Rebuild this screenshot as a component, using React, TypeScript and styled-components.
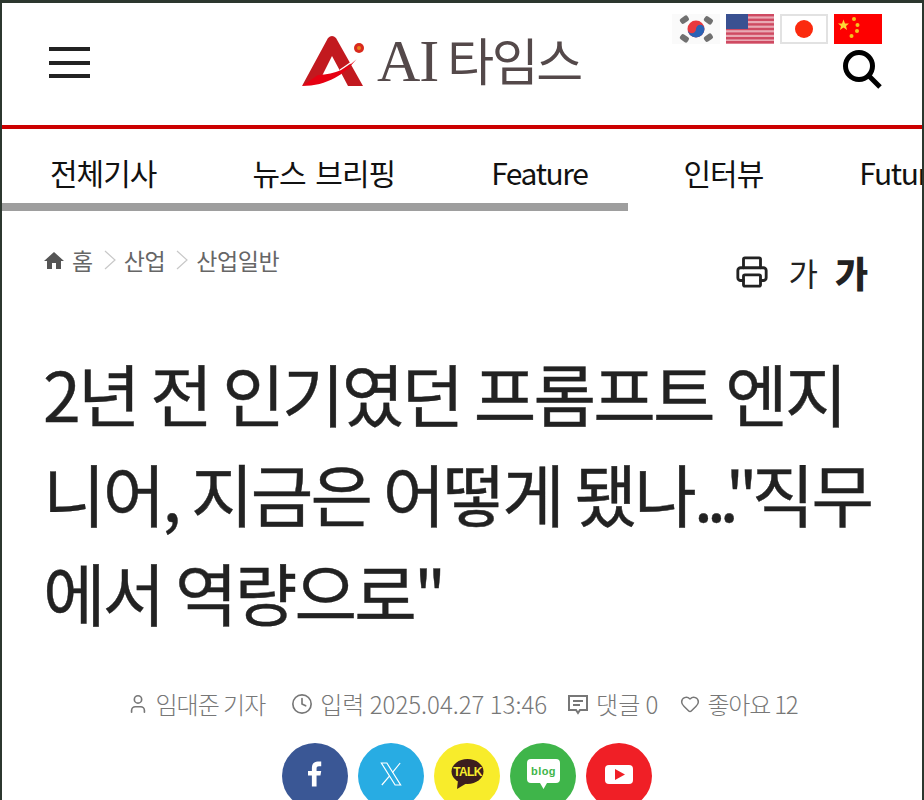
import React from 'react';
import styled, { createGlobalStyle } from 'styled-components';
import { Clock, Heart, Printer, User } from 'lucide-react';

const GlobalStyle = createGlobalStyle`
  html, body {
    margin: 0;
    padding: 0;
    background: #fff;
    overflow: hidden;
  }
  * { box-sizing: border-box; }
`;

const Page = styled.div`
  width: 924px;
  height: 800px;
  overflow: hidden;
  background: #fff;
  border-style: solid;
  border-color: #2c372f;
  border-width: 3px 2px 0 2px;
  font-family: 'Noto Sans CJK KR', 'Noto Sans', sans-serif;
`;

const Header = styled.header`
  position: relative;
  height: 122px;
  display: grid;
  grid-template-columns: 46px 1fr 40px;
  align-items: center;
  padding: 0 40px 0 46px;
`;

const RedLine = styled.div`
  height: 4px;
  background: #cc0000;
`;

const Burger = styled.div`
  width: 41px;
  height: 31px;
  display: flex;
  flex-direction: column;
  justify-content: space-between;
  margin: 0 0 3px 1px;
  & > span {
    height: 4px;
    background: #222;
  }
`;

const LogoWrap = styled.div`
  display: flex;
  align-items: center;
  gap: 13px;
  margin: 0 0 6px 208px;
`;

const LogoText = styled.div`
  display: flex;
  align-items: baseline;
  color: #54494a;
  line-height: 1;
`;

const LogoLatin = styled.span`
  font-family: 'Liberation Serif', serif;
  font-size: 60px;
  letter-spacing: -1px;
  margin-right: 9px;
`;

const LogoKorean = styled.span`
  font-weight: 400;
  font-size: 51px;
  letter-spacing: -2.5px;
`;

const Flags = styled.div`
  position: absolute;
  top: 11px;
  right: 40px;
  display: flex;
  gap: 6px;
`;

const SearchBtn = styled.div`
  display: flex;
  justify-content: flex-end;
  margin-top: 10px;
`;

const Nav = styled.nav`
  position: relative;
  height: 82px;
  display: flex;
  gap: 96px;
  padding: 21px 0 0 48px;
  overflow: hidden;
  white-space: nowrap;
`;

const NavItem = styled.a<{ $latin?: boolean }>`
  font-size: 30px;
  line-height: 44px;
  letter-spacing: ${(p) => (p.$latin ? '-1.4px' : '-1px')};
  word-spacing: 4px;
  color: #111;
  flex: none;
`;

const NavBar = styled.div`
  position: absolute;
  left: 0;
  bottom: 0;
  width: 626px;
  height: 8px;
  background: #9e9e9e;
`;

const TopRow = styled.div`
  display: flex;
  justify-content: space-between;
  align-items: flex-start;
  padding: 31px 54px 0 42px;
`;

const Crumbs = styled.div`
  display: flex;
  align-items: center;
  gap: 8px;
  color: #666;
  font-size: 23px;
  line-height: 36px;
  letter-spacing: -0.4px;
`;

const ChevronIcon = styled.svg`
  margin-left: 3px;
`;

const Tools = styled.div`
  display: flex;
  align-items: center;
  color: #222;
  margin-top: 8px;
`;

const FontSmall = styled.span`
  font-size: 32px;
  line-height: 44px;
  margin-left: 19px;
`;

const FontLarge = styled.span`
  font-size: 36px;
  line-height: 44px;
  font-weight: 900;
  margin-left: 17px;
`;

const Title = styled.h1`
  margin: 49px 0 0;
  padding: 0 32px 0 41px;
  font-size: 68px;
  line-height: 99.5px;
  font-weight: 400;
  letter-spacing: -2.8px;
  color: #222;
  word-break: break-all;
  -webkit-text-stroke: 0.4px #222;
`;

const TitlePunct = styled.span`
  letter-spacing: -6px;
`;

const Meta = styled.div`
  display: flex;
  justify-content: center;
  margin-top: 44px;
  color: #777;
  font-size: 24px;
  line-height: 36px;
  font-weight: 300;
`;

const MetaItem = styled.span<{ $spacing: number; $after?: number }>`
  display: flex;
  align-items: center;
  gap: 7px;
  letter-spacing: ${(p) => p.$spacing}px;
  margin-right: ${(p) => p.$after ?? 0}px;
`;

const Socials = styled.div`
  display: flex;
  justify-content: center;
  gap: 10px;
  margin-top: 21px;
  padding-left: 10px;
`;

const Circle = styled.div<{ $bg: string }>`
  width: 66px;
  height: 66px;
  border-radius: 50%;
  background: ${(p) => p.$bg};
  display: flex;
  align-items: center;
  justify-content: center;
  flex: none;
  padding-bottom: 3px;
`;

const LogoMark = () => (
  <svg width="62" height="50" viewBox="0 0 62 50">
    <path d="M0 50 L26 2 Q30 -2 34 2 L61 50 H46 L37 33 L30 20 L19 42 Z" fill="#c2191f" />
    <path d="M0 50 C25 50 44 38 55 22 C46 33 34 38 16 39 Z" fill="#e60012" />
    <path d="M38 34 C44 30 50 26 55 22" stroke="#fff" strokeWidth="1.2" fill="none" />
    <circle cx="57" cy="12" r="5" fill="#d92a1c" />
    <circle cx="57" cy="12" r="2" fill="#e8811a" />
  </svg>
);

const FlagKorea = () => (
  <svg width="48" height="30" viewBox="0 0 48 30">
    <rect width="48" height="30" fill="#fafafa" />
    <g fill="#707070">
      <rect x="8" y="3" width="9" height="6" rx="2" transform="rotate(-35 12 6)" />
      <rect x="32" y="3" width="9" height="6" rx="2" transform="rotate(35 36 6)" />
      <rect x="8" y="21" width="9" height="6" rx="2" transform="rotate(35 12 24)" />
      <rect x="32" y="21" width="9" height="6" rx="2" transform="rotate(-35 36 24)" />
    </g>
    <circle cx="24" cy="15" r="8.5" fill="#e8393f" />
    <path d="M15.5 15 A8.5 8.5 0 0 0 32.5 15 A4.2 4.2 0 0 0 24 15 A4.2 4.2 0 0 1 15.5 15" fill="#2a62b5" />
  </svg>
);

const FlagUsa = () => (
  <svg width="48" height="30" viewBox="0 0 48 30">
    <rect width="48" height="30" fill="#e9a9b4" />
    {[0, 4.6, 9.2, 13.8, 18.4, 23, 27].map((y) => (
      <rect key={y} y={y} width="48" height="2.4" fill="#cf4a62" />
    ))}
    <rect width="22" height="15" fill="#3a5191" />
  </svg>
);

const FlagJapan = () => (
  <svg width="48" height="30" viewBox="0 0 48 30">
    <rect x="1" y="1" width="46" height="28" fill="#fff" stroke="#e2e2e2" strokeWidth="2" />
    <circle cx="24" cy="15" r="9" fill="#fb2a0e" />
  </svg>
);

const FlagChina = () => (
  <svg width="48" height="30" viewBox="0 0 48 30">
    <rect width="48" height="30" fill="#fe0000" />
    <path d="M9.5 5.5 L11 9.5 L15 9.5 L12 12 L13 16 L9.5 13.6 L6 16 L7 12 L4 9.5 L8 9.5 Z" fill="#fdd835" />
    <g fill="#f6c51c">
      <circle cx="20" cy="5" r="2" />
      <circle cx="23.5" cy="11" r="2" />
      <circle cx="23" cy="17" r="2" />
      <circle cx="17.5" cy="22" r="2" />
    </g>
  </svg>
);

const HomeIcon = () => (
  <svg width="20" height="20" viewBox="0 0 20 20" fill="#555">
    <path d="M10 2 L20 11 H17 V19 H12 V13 H8 V19 H3 V11 H0 Z" />
  </svg>
);

const Chevron = () => (
  <ChevronIcon width="12" height="22" viewBox="0 0 12 22" fill="none" stroke="#c8c8c8" strokeWidth="1.2">
    <path d="M1 2 L11 11 L1 20" />
  </ChevronIcon>
);

const Comment = () => (
  <svg width="22" height="22" viewBox="0 0 22 22" fill="none" stroke="#777" strokeWidth="2">
    <path d="M2 3 H20 V17 H13 L11 20 L9 17 H2 Z" />
    <path d="M6 8 H16 M6 12 H13" />
  </svg>
);

const FacebookMark = () => (
  <svg width="14" height="26" viewBox="0 0 18 32" fill="#fff">
    <path d="M5 32 V18 H0 V12 H5 V8 C5 3 8 0 12.5 0 H17 V6 H14 C12 6 11 7 11 9 V12 H17 L16 18 H11 V32 Z" />
  </svg>
);

const XMark = () => (
  <svg width="22" height="24" viewBox="0 0 24 26" fill="none" stroke="#fff" strokeWidth="1.3">
    <path d="M1.5 1 H7.5 L22.5 25 H16.5 Z" />
    <path d="M22 1 L13.5 11.5 M10.5 15 L2 25" />
  </svg>
);

const KakaoMark = () => (
  <svg width="33" height="30" viewBox="0 0 33 30">
    <ellipse cx="16.5" cy="12.5" rx="16" ry="12.5" fill="#3c1e1e" />
    <path d="M7 21 L6 30 L16 24 Z" fill="#3c1e1e" />
    <text x="16.5" y="17" textAnchor="middle" fontFamily="Liberation Sans" fontWeight="700" fontSize="12" letterSpacing="-0.6" fill="#f8ec2b">TALK</text>
  </svg>
);

const BlogMark = () => (
  <svg width="33" height="30" viewBox="0 0 33 30">
    <path d="M4 0 H29 Q33 0 33 4 V20 Q33 24 29 24 H20 L16.5 30 L13 24 H4 Q0 24 0 20 V4 Q0 0 4 0 Z" fill="#fff" />
    <text x="16.5" y="16" textAnchor="middle" fontFamily="Liberation Sans" fontWeight="700" fontSize="11" letterSpacing="0.4" fill="#3fb54a">blog</text>
  </svg>
);

const YoutubeMark = () => (
  <svg width="28" height="19" viewBox="0 0 28 19">
    <rect width="28" height="19" rx="4" fill="#fff" />
    <path d="M10 4 L20 9.5 L10 15 Z" fill="#f01f26" />
  </svg>
);

export default function App() {
  return (
    <Page>
      <GlobalStyle />
      <Header>
        <Burger>
          <span />
          <span />
          <span />
        </Burger>
        <LogoWrap>
          <LogoMark />
          <LogoText>
            <LogoLatin>AI</LogoLatin>
            <LogoKorean>타임스</LogoKorean>
          </LogoText>
        </LogoWrap>
        <SearchBtn>
          <svg width="40" height="40" viewBox="0 0 40 40" fill="none" stroke="#000" strokeWidth="5">
            <circle cx="17" cy="17" r="13.5" />
            <path d="M27 27 L38 38" />
          </svg>
        </SearchBtn>
        <Flags>
          <FlagKorea />
          <FlagUsa />
          <FlagJapan />
          <FlagChina />
        </Flags>
      </Header>
      <RedLine />
      <Nav>
        <NavItem>전체기사</NavItem>
        <NavItem>뉴스 브리핑</NavItem>
        <NavItem $latin>Feature</NavItem>
        <NavItem>인터뷰</NavItem>
        <NavItem $latin>Future</NavItem>
        <NavBar />
      </Nav>
      <TopRow>
        <Crumbs>
          <HomeIcon />
          <span>홈</span>
          <Chevron />
          <span>산업</span>
          <Chevron />
          <span>산업일반</span>
        </Crumbs>
        <Tools>
          <Printer size={34} strokeWidth={2} />
          <FontSmall>가</FontSmall>
          <FontLarge>가</FontLarge>
        </Tools>
      </TopRow>
      <Title>
        2년 전 인기였던 프롬프트 엔지니어, 지금은 어떻게 됐나<TitlePunct>..."</TitlePunct>직무에서 역량으로"
      </Title>
      <Meta>
        <MetaItem $spacing={-1} $after={26}>
          <User size={22} strokeWidth={1.8} />
          임대준 기자
        </MetaItem>
        <MetaItem $spacing={0} $after={20}>
          <Clock size={22} strokeWidth={1.8} />
          입력 2025.04.27 13:46
        </MetaItem>
        <MetaItem $spacing={0} $after={22}>
          <Comment />
          댓글 0
        </MetaItem>
        <MetaItem $spacing={-1.2}>
          <Heart size={20} strokeWidth={1.8} />
          좋아요 12
        </MetaItem>
      </Meta>
      <Socials>
        <Circle $bg="#3a5795">
          <FacebookMark />
        </Circle>
        <Circle $bg="#28ace3">
          <XMark />
        </Circle>
        <Circle $bg="#f8ec2b">
          <KakaoMark />
        </Circle>
        <Circle $bg="#3fb54a">
          <BlogMark />
        </Circle>
        <Circle $bg="#f01f26">
          <YoutubeMark />
        </Circle>
      </Socials>
    </Page>
  );
}
